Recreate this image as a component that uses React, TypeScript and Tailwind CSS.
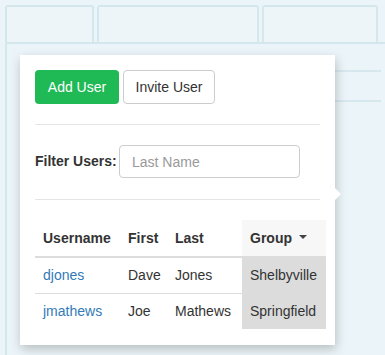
import { useState } from "react";

const users = [
  { username: "djones", first: "Dave", last: "Jones", group: "Shelbyville" },
  { username: "jmathews", first: "Joe", last: "Mathews", group: "Springfield" },
];

export default function App() {
  const [filter, setFilter] = useState("");

  return (
    <div className="relative w-[385px] h-[355px] overflow-hidden bg-[#ebf4f8] font-['Liberation_Sans',Arial,sans-serif] text-[14px] text-[#333]">
      {/* Blurred page behind the popover */}
      <div className="blur-[0.6px] pl-[5px] pt-[5px]">
        <div className="flex gap-[3px]">
          <div className="w-[89px] h-[37px] rounded-t-[3px] border-2 border-b-0 border-[#d3e7ed] bg-[#edf5f9]" />
          <div className="w-[162px] h-[37px] rounded-t-[3px] border-2 border-b-0 border-[#d3e7ed] bg-[#edf5f9]" />
          <div className="w-[116px] h-[37px] rounded-t-[3px] border-2 border-b-0 border-[#d3e7ed] bg-[#edf5f9]" />
        </div>
        <div className="h-[320px] border-l-2 border-t-2 border-[#d3e7ed]">
          <div className="ml-[328px] mr-[4px] h-[28px] border-b-2 border-[#d6e8ee]" />
          <div className="ml-[328px] mr-[4px] h-[30px] border-b-2 border-[#d6e8ee]" />
        </div>
      </div>

      {/* Popover */}
      <div className="absolute left-[20px] top-[55px] w-[315px] h-[290px] bg-white px-[15px] pt-[15px] shadow-[1px_4px_10px_rgba(0,0,0,0.22)]">
        <div className="absolute -right-[6px] top-[133px] w-0 h-0 border-y-[6px] border-y-transparent border-l-[6px] border-l-white" />

        <div className="flex gap-[4px]">
          <button className="h-[34px] w-[84px] rounded-[4px] bg-[#1fb956] text-white">
            Add User
          </button>
          <button className="h-[34px] w-[92px] rounded-[4px] border border-[#ccc] bg-white text-[#333]">
            Invite User
          </button>
        </div>

        <div className="mt-[20px] border-t border-[#e5e5e5]" />

        <div className="mt-[20px] flex items-center">
          <label className="w-[84px] font-bold">Filter Users:</label>
          <input
            value={filter}
            onChange={(e) => setFilter(e.target.value)}
            placeholder="Last Name"
            className="w-[181px] h-[33px] px-[12px] rounded-[4px] border border-[#ccc] placeholder:text-[#999] outline-none"
          />
        </div>

        <div className="mt-[21px] border-t border-[#e5e5e5]" />

        <table className="mt-[20px] w-[291px] table-fixed border-collapse">
          <colgroup>
            <col className="w-[85px]" />
            <col className="w-[47px]" />
            <col className="w-[75px]" />
            <col className="w-[84px]" />
          </colgroup>
          <thead>
            <tr className="border-b-2 border-[#ddd]">
              <th className="h-[37px] px-[8px] text-left font-bold">Username</th>
              <th className="px-[8px] text-left font-bold">First</th>
              <th className="px-[8px] text-left font-bold">Last</th>
              <th className="px-[8px] text-left font-bold bg-[#f7f7f7]">
                Group
                <span className="inline-block ml-[7px] mb-[3px] align-middle w-0 h-0 border-x-[4px] border-x-transparent border-t-[4px] border-t-[#444]" />
              </th>
            </tr>
          </thead>
          <tbody>
            {users.map((u, i) => (
              <tr key={u.username} className={i === 0 ? "border-b border-[#ddd]" : ""}>
                <td className="h-[36px] px-[8px] text-[#337ab7]">{u.username}</td>
                <td className="px-[8px]">{u.first}</td>
                <td className="px-[8px]">{u.last}</td>
                <td className="px-[8px] bg-[#dcdcdc]">{u.group}</td>
              </tr>
            ))}
          </tbody>
        </table>
      </div>
    </div>
  );
}
